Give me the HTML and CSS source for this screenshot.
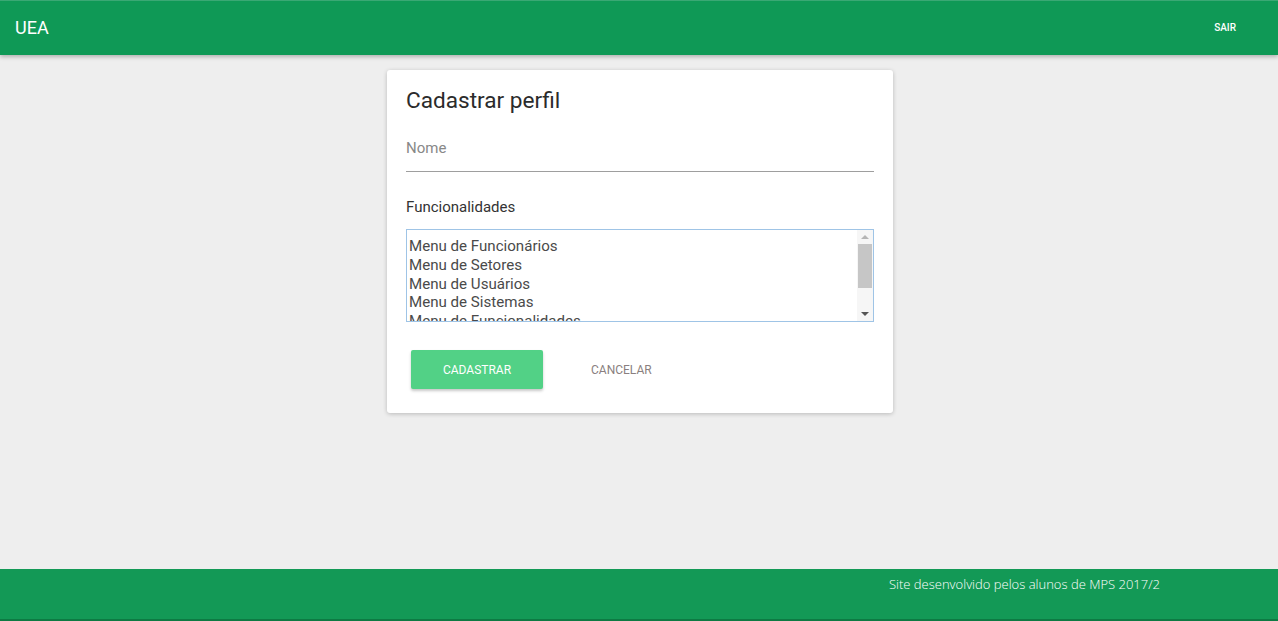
FILE: index.html
```html
<!DOCTYPE html>
<html lang="pt-BR">
<head>
<meta charset="utf-8">
<title>UEA - Cadastrar perfil</title>
<link rel="stylesheet" href="styles.css">
</head>
<body>
<div class="page">
  <header class="topbar">
    <a class="brand" href="#">UEA</a>
    <a class="logout" href="#">SAIR</a>
  </header>
  <main class="main">
    <section class="card">
      <h1 class="card-title">Cadastrar perfil</h1>
      <div class="field">
        <input class="text-input" type="text" placeholder="Nome">
      </div>
      <label class="select-label">Funcionalidades</label>
      <div class="listbox">
        <select class="list" multiple size="5">
          <option>Menu de Funcionários</option>
          <option>Menu de Setores</option>
          <option>Menu de Usuários</option>
          <option>Menu de Sistemas</option>
          <option>Menu de Funcionalidades</option>
          <option>Menu de Perfis</option>
          <option>Menu de Relatórios</option>
        </select>
        <div class="scrollbar" aria-hidden="true">
          <span class="arrow arrow-up"></span>
          <div class="track"><span class="thumb"></span></div>
          <span class="arrow arrow-down"></span>
        </div>
      </div>
      <div class="actions">
        <button class="btn btn-primary" type="button">CADASTRAR</button>
        <button class="btn btn-flat" type="button">CANCELAR</button>
      </div>
    </section>
  </main>
  <footer class="footer">
    <p class="footer-text">Site desenvolvido pelos alunos de MPS 2017/2</p>
  </footer>
</div>
</body>
</html>
```

FILE: styles.css
```css
* { box-sizing: border-box; }
html, body { margin: 0; padding: 0; }
body {
  background: #eeeeee;
  font-family: Roboto, "Liberation Sans", Arial, sans-serif;
  color: #333;
}
.page {
  min-height: 100vh;
  display: flex;
  flex-direction: column;
}
.topbar {
  height: 55px;
  background: #0f9956;
  border-top: 1px solid #3aa874;
  display: flex;
  align-items: center;
  justify-content: space-between;
  padding: 0 42px 0 15px;
  box-shadow: 0 2px 4px rgba(0,0,0,0.25);
  position: relative;
  z-index: 1;
}
.brand {
  color: #fff;
  text-decoration: none;
  font-size: 18px;
  font-weight: 400;
  margin-top: -1px;
}
.logout {
  color: #fff;
  text-decoration: none;
  font-size: 10px;
  font-weight: 500;
  margin-top: -2px;
}
.main {
  flex: 1;
  display: flex;
  justify-content: center;
  align-items: flex-start;
  padding-top: 15px;
  padding-left: 2px;
}
.card {
  width: 506px;
  background: #fff;
  border-radius: 3px;
  box-shadow: 0 1px 4px rgba(0,0,0,0.22);
  padding: 17px 19px 24px 19px;
}
.card-title {
  margin: 0;
  font-size: 22.6px;
  line-height: 28px;
  font-weight: 400;
  color: #2b2b2b;
}
.field {
  margin-top: 19px;
}
.text-input {
  width: 100%;
  border: none;
  border-bottom: 1px solid #9e9e9e;
  outline: none;
  font-family: inherit;
  font-size: 15px;
  height: 38px;
  padding: 0 0 9px 0;
  background: transparent;
  color: #333;
}
.text-input::placeholder { color: #888; }
.select-label {
  display: block;
  margin-top: 26px;
  font-size: 15px;
  line-height: 18px;
  color: #333;
}
.listbox {
  display: flex;
  height: 93px;
  margin-top: 13px;
  border: 1px solid #9fc4e6;
  background: #fff;
}
.list {
  flex: 1;
  min-width: 0;
  height: 100%;
  border: none;
  padding: 7px 2px 0 2px;
  font-family: inherit;
  font-size: 15.1px;
  color: #4a4a4a;
  background: #fff;
  outline: none;
  overflow: hidden;
  scrollbar-width: none;
}
.list option { padding: 0 0 0.75px 0; }
.scrollbar {
  width: 16px;
  display: flex;
  flex-direction: column;
  background: #f6f6f6;
  padding: 0 1px;
}
.arrow {
  height: 14px;
  display: flex;
  align-items: center;
  justify-content: center;
}
.arrow::before {
  content: "";
  width: 0;
  height: 0;
  border-left: 4px solid transparent;
  border-right: 4px solid transparent;
}
.arrow-up::before { border-bottom: 4px solid #b5b5b5; }
.arrow-down::before { border-top: 4px solid #555; }
.track {
  flex: 1;
  display: flex;
  flex-direction: column;
}
.thumb {
  height: 44px;
  background: #c6c6c6;
}
.actions {
  display: flex;
  align-items: center;
  margin-top: 28px;
  padding-left: 5px;
}
.btn {
  font-family: inherit;
  font-size: 12px;
  font-weight: 400;
  border: none;
  cursor: pointer;
  height: 39px;
  border-radius: 2px;
  background: transparent;
}
.btn-primary {
  width: 132px;
  background: #52d186;
  color: #fff;
  box-shadow: 0 2px 3px rgba(0,0,0,0.22);
}
.btn-flat {
  margin-left: 32px;
  padding: 0 16px;
  color: #8a7f80;
}
.footer {
  height: 52px;
  background: #139956;
  border-bottom: 2px solid #0d7a43;
  display: flex;
  justify-content: flex-end;
  align-items: flex-start;
  padding-right: 118px;
}
.footer-text {
  margin: 6px 0 0 0;
  font-family: "Open Sans", "Noto Sans", sans-serif;
  font-weight: 300;
  font-size: 13px;
  color: #fff;
}
```
